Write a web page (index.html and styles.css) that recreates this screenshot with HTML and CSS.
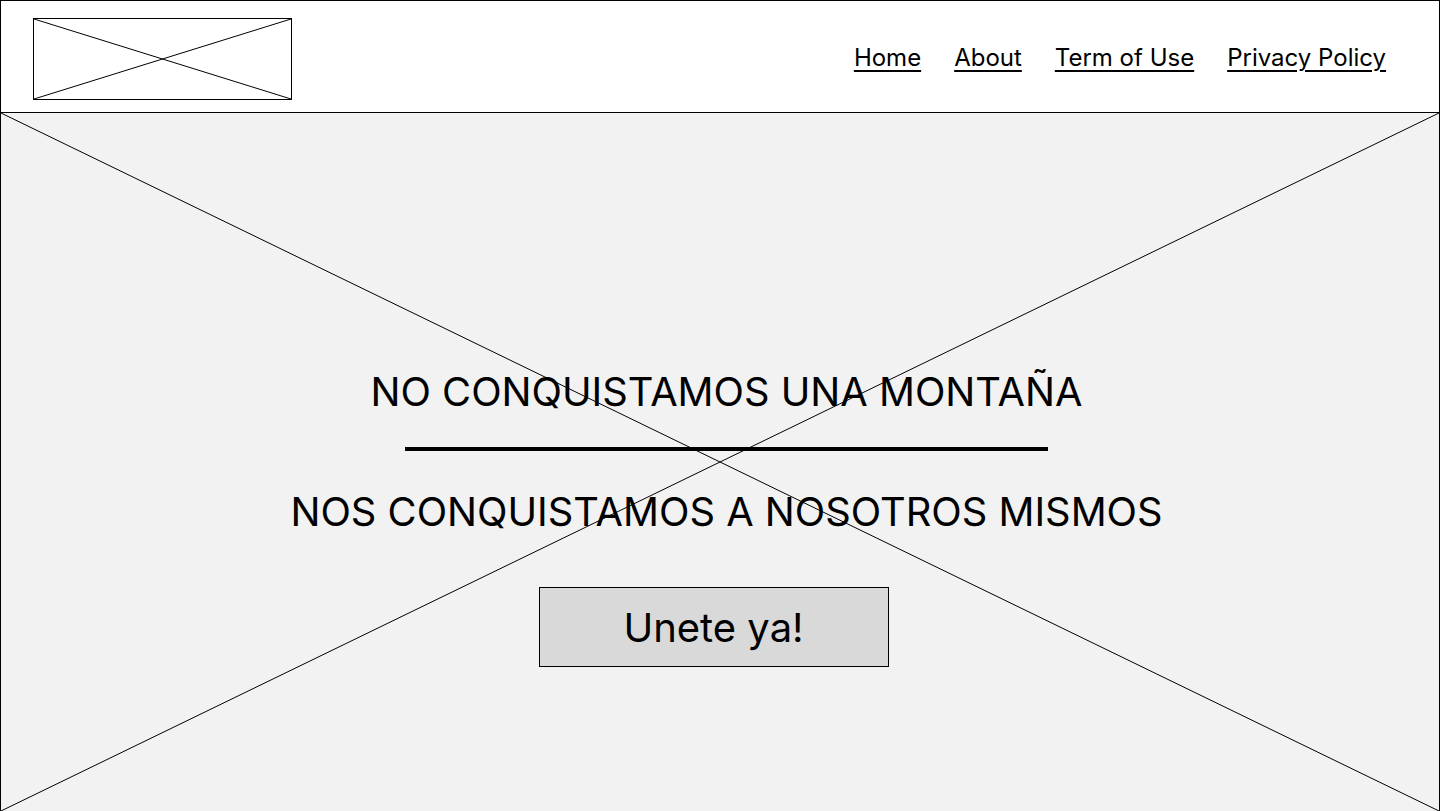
FILE: index.html
```html
<!DOCTYPE html>
<html lang="es">
<head>
<meta charset="utf-8">
<title>Landing</title>
<link rel="stylesheet" href="styles.css">
</head>
<body>
<div class="page">
  <header class="header">
    <div class="logo">
      <svg class="x" viewBox="0 0 100 100" preserveAspectRatio="none"><line x1="0" y1="0" x2="100" y2="100" vector-effect="non-scaling-stroke"/><line x1="0" y1="100" x2="100" y2="0" vector-effect="non-scaling-stroke"/></svg>
    </div>
    <nav class="nav">
      <a href="#">Home</a>
      <a href="#">About</a>
      <a href="#">Term of Use</a>
      <a href="#">Privacy Policy</a>
    </nav>
  </header>
  <main class="hero">
    <svg class="x hero-x" viewBox="0 0 100 100" preserveAspectRatio="none"><line x1="0" y1="0" x2="100" y2="100" vector-effect="non-scaling-stroke"/><line x1="0" y1="100" x2="100" y2="0" vector-effect="non-scaling-stroke"/></svg>
    <div class="content">
      <h1 class="title">NO CONQUISTAMOS UNA MONTAÑA</h1>
      <div class="rule"></div>
      <h2 class="title">NOS CONQUISTAMOS A NOSOTROS MISMOS</h2>
      <button class="cta">Unete ya!</button>
    </div>
  </main>
</div>
</body>
</html>
```
FILE: styles.css
```css
* { box-sizing: border-box; }
html, body { margin: 0; padding: 0; }
body {
  font-family: Inter, "Noto Sans", sans-serif;
  color: #000;
  background: #fff;
  width: 1440px;
  height: 811px;
  overflow: hidden;
}
.page {
  display: flex;
  flex-direction: column;
  height: 811px;
  border: 1px solid #000;
  border-bottom: none;
}
.header {
  height: 112px;
  border-bottom: 1px solid #000;
  display: flex;
  align-items: flex-start;
  justify-content: space-between;
  padding: 17px 53px 0 32px;
  background: #fff;
}
.logo {
  width: 259px;
  height: 82px;
  border: 1px solid #000;
}
.x { display: block; width: 100%; height: 100%; }
.x line { stroke: #000; stroke-width: 1; }
.nav {
  display: flex;
  gap: 33px;
  margin-top: 24px;
}
.nav a {
  color: #000;
  font-size: 24px;
  line-height: 32px;
  text-decoration: underline;
  text-underline-offset: 4px;
  text-decoration-thickness: 1.5px;
}
.hero {
  flex: 1;
  position: relative;
  background: #f2f2f2;
}
.hero-x {
  position: absolute;
  inset: 0;
}
.content {
  position: relative;
  display: flex;
  flex-direction: column;
  align-items: center;
  padding-top: 251px;
}
.title {
  margin: 0;
  font-size: 39.8px;
  font-weight: 400;
  line-height: 56px;
  padding-left: 13px;
}
.rule {
  width: 643px;
  height: 4px;
  background: #000;
  margin: 27px 0 0 13px;
}
h2.title { margin-top: 33px; }
.cta {
  margin: 47px 0 0 -13px;
  width: 350px;
  height: 80px;
  background: #d9d9d9;
  border: 1px solid #000;
  font-family: inherit;
  font-size: 40px;
  color: #000;
  padding: 0;
}
```
